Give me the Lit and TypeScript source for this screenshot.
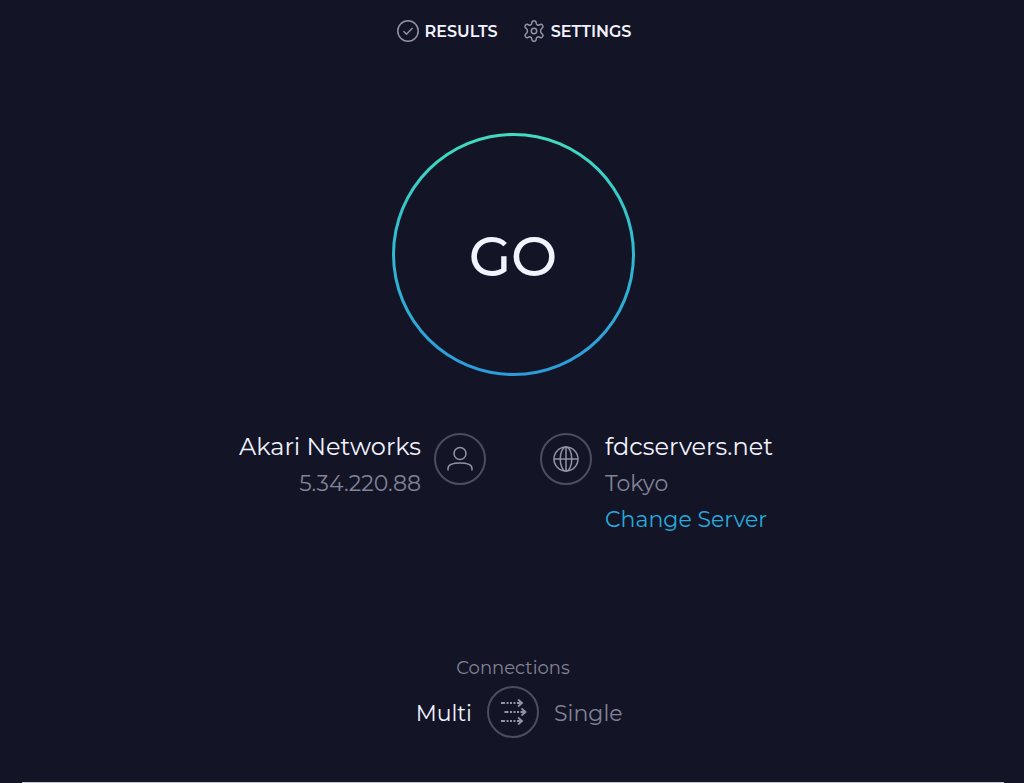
import { LitElement, html, css, svg } from "lit";
import { customElement, state } from "lit/decorators.js";
import { classMap } from "lit/directives/class-map.js";

const checkIcon = svg`<circle cx="11" cy="11" r="10.2"/><path d="M6.500 11.200l3 3 6-6.200"/>`;
const gearIcon = svg`<path d="M9.1 1.8Q9.4.8 11 .8t1.9 1l.5 2q.3.9 1.1 1.2.8.4 1.6 0l1.7-.7q1-.3 1.8 1t.1 2.2l-1.5 1.6q-.6.6-.6 1.9t.6 1.9l1.5 1.6q.7.9-.1 2.2t-1.8 1l-1.7-.7q-.8-.4-1.6 0-.8.3-1.1 1.2l-.5 2q-.3 1-1.9 1t-1.9-1l-.5-2q-.3-.9-1.1-1.2-.8-.4-1.6 0l-1.7.7q-1 .3-1.8-1t-.1-2.2l1.5-1.6q.6-.6.6-1.9t-.6-1.9L2.3 7.5q-.7-.9.1-2.2t1.8-1l1.7.7q.8.4 1.6 0 .8-.3 1.1-1.2z"/><circle cx="11" cy="11" r="2.7"/>`;
const userIcon = svg`<circle cx="26" cy="20.5" r="6"/><path d="M14 37.5v-2q0-2.8 3-4.100 3.500-1.400 9-1.400t9 1.400q3 1.300 3 4.100v2"/>`;
const globeIcon = svg`<circle cx="26" cy="26" r="12"/><ellipse cx="26" cy="26" rx="5.8" ry="12"/><path d="M14 26h24M26 14v24"/>`;
const arrowsIcon = svg`<g stroke-width="1.8"><path stroke-dasharray="4 1.5 2 1.5 2 1.5 2 1.5 9" d="M14 17h20"/><path stroke-dasharray="4 1.5 2 1.5 2 1.5 2 1.5 9" d="M17.5 26H37.5"/><path stroke-dasharray="4 1.5 2 1.5 2 1.5 2 1.5 9" d="M14 35h20"/><path d="M31 13.5l4 3.500-4 3.500M34.500 22.500l4 3.500-4 3.500M31 31.500l4 3.500-4 3.500"/></g>`;

@customElement("app-root")
export class AppRoot extends LitElement {
  @state() private mode: "multi" | "single" = "multi";

  static styles = css`
    :host {
      display: flex;
      flex-direction: column;
      min-height: 100vh;
      box-sizing: border-box;
      background: #131425;
      color: #f2f3ff;
      font-family: Montserrat, Inter, sans-serif;
    }
    button {
      font: inherit;
      color: inherit;
      background: none;
      border: 0;
      padding: 0;
      cursor: pointer;
    }
    a {
      color: inherit;
      text-decoration: none;
    }
    svg {
      display: block;
      fill: none;
      stroke: #9193a8;
      stroke-width: 1.5;
    }
    .nav {
      display: flex;
      justify-content: center;
      gap: 25px;
      padding: 20px 0 0 4px;
      font-size: 16px;
      font-weight: 600;
      line-height: 24px;
    }
    .nav-link {
      display: flex;
      align-items: flex-start;
      gap: 6px;
    }
    .main {
      flex: 1;
      display: flex;
      flex-direction: column;
      align-items: center;
      padding: 89px 0 44px 2px;
    }
    .go {
      display: grid;
      place-items: center;
      width: 243px;
      height: 243px;
      padding-top: 4px;
      border: 3px solid transparent;
      border-radius: 50%;
      box-sizing: border-box;
      background:
        linear-gradient(#131425, #131425) padding-box,
        linear-gradient(#42dcc0, #2fb9d0 50%, #2b9bdc) border-box;
      font-size: 55px;
      font-weight: 500;
      line-height: 60px;
    }
    .info {
      display: grid;
      grid-template-columns: 1fr 1fr;
      gap: 54px;
      align-self: stretch;
      margin-top: 53px;
      line-height: 36px;
      font-size: 22px;
    }
    .party {
      display: flex;
      gap: 13px;
    }
    .client {
      justify-content: flex-end;
      text-align: right;
    }
    .name {
      font-size: 24px;
      line-height: 35px;
      margin-bottom: 2px;
    }
    .muted {
      color: #828398;
    }
    .change {
      color: #26aadd;
    }
    .ring {
      flex: none;
      width: 52px;
      height: 52px;
      border: 2px solid #4c4d60;
      border-radius: 50%;
      box-sizing: border-box;
      display: grid;
      place-items: center;
    }
    .party .ring {
      margin-top: 4px;
    }
    .connections {
      align-self: stretch;
      margin-top: auto;
      text-align: center;
    }
    .caption {
      font-size: 18px;
      line-height: 24px;
      margin-bottom: 6px;
      color: #828398;
    }
    .modes {
      display: grid;
      grid-template-columns: 1fr auto 1fr;
      align-items: center;
      gap: 15px;
      font-size: 22px;
      line-height: 36px;
      color: #828398;
    }
    .mode {
      padding-top: 4px;
    }
    .multi {
      justify-self: end;
    }
    .single {
      justify-self: start;
    }
    .active {
      color: #f2f3ff;
    }
    .edge {
      height: 1px;
      margin: 0 20px 0 22px;
      background: #c5c6d0;
    }
  `;

  private toggle() {
    this.mode = this.mode === "multi" ? "single" : "multi";
  }

  private modeButton(mode: "multi" | "single", text: string) {
    const on = this.mode === mode;
    return html`<button
      class=${classMap({ mode: true, [mode]: true, active: on })}
      aria-pressed=${on ? "true" : "false"}
      @click=${() => (this.mode = mode)}
    >${text}</button>`;
  }

  render() {
    return html`
      <nav class="nav">
        <a class="nav-link" href="#results">
          <svg width="22" height="22" viewBox="0 0 22 22" aria-hidden="true">${checkIcon}</svg>RESULTS
        </a>
        <a class="nav-link" href="#settings">
          <svg width="22" height="22" viewBox="0 0 22 22" aria-hidden="true">${gearIcon}</svg>SETTINGS
        </a>
      </nav>
      <main class="main">
        <button class="go">GO</button>
        <section class="info">
          <div class="party client">
            <div>
              <div class="name">Akari Networks</div>
              <div class="muted">5.34.220.88</div>
            </div>
            <div class="ring">
              <svg width="48" height="48" viewBox="2 2 48 48" aria-hidden="true">${userIcon}</svg>
            </div>
          </div>
          <div class="party">
            <div class="ring">
              <svg width="48" height="48" viewBox="2 2 48 48" aria-hidden="true">${globeIcon}</svg>
            </div>
            <div>
              <div class="name">fdcservers.net</div>
              <div class="muted">Tokyo</div>
              <a class="change" href="#servers">Change Server</a>
            </div>
          </div>
        </section>
        <section class="connections" role="group" aria-labelledby="caption">
          <div class="caption" id="caption">Connections</div>
          <div class="modes">
            ${this.modeButton("multi", "Multi")}
            <button class="ring" aria-label="Switch connection mode" @click=${this.toggle}>
              <svg width="48" height="48" viewBox="2 2 48 48" aria-hidden="true">${arrowsIcon}</svg>
            </button>
            ${this.modeButton("single", "Single")}
          </div>
        </section>
      </main>
      <div class="edge"></div>
    `;
  }
}
